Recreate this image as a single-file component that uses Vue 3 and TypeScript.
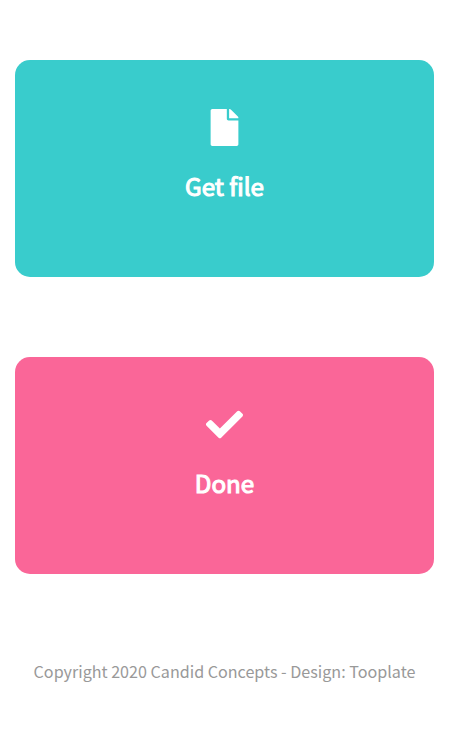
<script setup lang="ts">
interface Card {
  label: string
  tone: string
  viewBox: string
  path: string
}

const cards: Card[] = [
  {
    label: 'Get file',
    tone: 'teal',
    viewBox: '0 0 384 512',
    path: 'M224 136V0H24C10.7 0 0 10.7 0 24v464c0 13.3 10.7 24 24 24h336c13.3 0 24-10.7 24-24V160H248c-13.2 0-24-10.8-24-24zm160-14.1v6.1H256V0h6.1c6.4 0 12.5 2.5 17 7l97.9 98c4.5 4.5 7 10.6 7 16.9z',
  },
  {
    label: 'Done',
    tone: 'pink',
    viewBox: '0 0 512 512',
    path: 'M173.898 439.404l-166.4-166.4c-9.997-9.997-9.997-26.206 0-36.204l36.203-36.204c9.997-9.998 26.207-9.998 36.204 0L192 312.69 432.095 72.596c9.997-9.997 26.207-9.997 36.204 0l36.203 36.204c9.997 9.997 9.997 26.206 0 36.204l-294.4 294.401c-9.998 9.997-26.207 9.997-36.204-.001z',
  },
]
</script>

<template>
  <main class="page">
    <section class="cards">
      <a v-for="card in cards" :key="card.label" class="card" :class="card.tone">
        <svg class="icon" :viewBox="card.viewBox" aria-hidden="true">
          <path :d="card.path" />
        </svg>
        <h2 class="title">{{ card.label }}</h2>
      </a>
    </section>
    <footer class="footer">Copyright 2020 Candid Concepts - Design: Tooplate</footer>
  </main>
</template>

<style>
body {
  background: #fff;
}
</style>

<style scoped>
.page {
  box-sizing: border-box;
  min-height: 750px;
  padding: 60px 15px 0;
  font-family: 'Noto Sans CJK JP', 'Noto Sans', sans-serif;
}
.cards {
  display: flex;
  flex-direction: column;
  gap: 80px;
}
.card {
  box-sizing: border-box;
  height: 217px;
  padding-top: 49px;
  border-radius: 15px;
  display: flex;
  flex-direction: column;
  align-items: center;
  color: #fff;
}
.teal {
  background: #39cccc;
}
.pink {
  background: #fa6698;
}
.icon {
  width: 100%;
  height: 37px;
  fill: currentColor;
}
.title {
  margin: 20px 0 0;
  font-size: 24.17px;
  line-height: 40px;
  font-weight: 400;
  -webkit-text-stroke: 1.1px currentColor;
  white-space: nowrap;
}
.footer {
  margin-top: 83px;
  text-align: center;
  font-size: 16.12px;
  line-height: 28px;
  color: #999;
  white-space: nowrap;
}
</style>
